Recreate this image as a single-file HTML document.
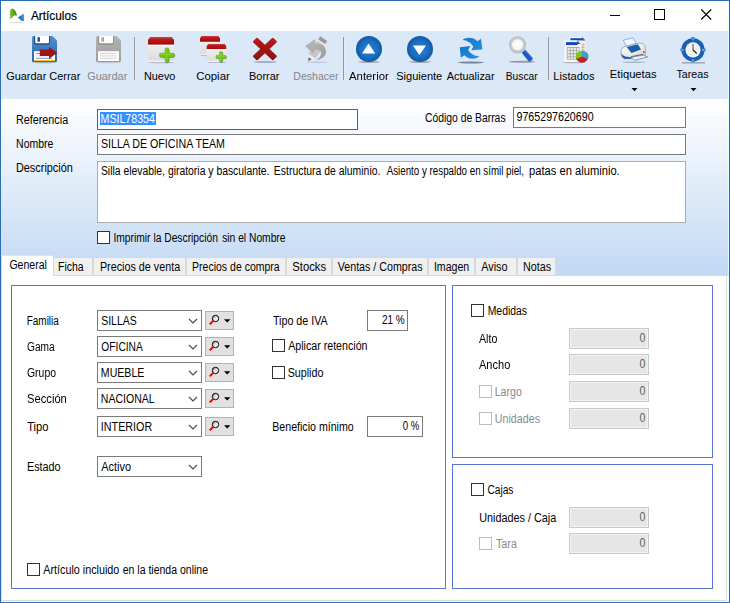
<!DOCTYPE html>
<html><head><meta charset="utf-8">
<style>
*{box-sizing:border-box;margin:0;padding:0}
html,body{width:730px;height:603px;overflow:hidden;background:#fff}
body{font-family:"Liberation Sans",sans-serif;font-size:11px;color:#000;position:relative}
.a{position:absolute;white-space:nowrap;transform-origin:0 0}
.t12{font-size:11.4px;line-height:14px}
.t11{font-size:12.5px;line-height:14px}
.t13{font-size:12.5px;line-height:14px;-webkit-text-stroke:0.2px currentColor}
.dis{color:#858585}
.gr{color:#8a8a8a}
.g0{color:#626262}
.wh{color:#fff}
#win{left:0;top:0;width:730px;height:603px;border:1px solid #2a6db4;background:#fff}
#tb{left:1px;top:31px;width:728px;height:68px;background:#dbe8f7}
.sep{width:1px;background:#96969a;box-shadow:-1px 0 0 #e3edfa,1px 0 0 #e3edfa;top:37px;height:43px}
#hdr{left:1px;top:99px;width:728px;height:177px;background:linear-gradient(#ffffff,#c1d8f3)}
.in{background:#fff;border:1px solid #7a7a7a}
.cb{width:13px;height:13px;border:1px solid #333;background:#fff}
.cbd{width:13px;height:13px;border:1px solid #bcbcbc;background:#fff}
.tab{top:257px;height:18px;background:#f0f0f0;border:1px solid #d9d9d9;border-bottom:none}
#page{left:1px;top:275px;width:726px;height:326px;background:#fff;border:1px solid #dadada}
.gb{border:1px solid #5a74d6;background:#fff}
.cmb{background:#fff;border:1px solid #7a7a7a;height:21px;width:105px;left:97px}
.sb{width:29px;height:19px;background:#e1e1e1;border:1px solid #b2b2b2;left:205px}
.num{background:#e6e6e6;border:1px solid #c9c9c9;box-shadow:inset 0 0 0 1px #f2f2f2;width:80px;height:21px;left:569px}
</style></head><body>
<div class="a" id="win"></div>
<svg class="a" style="left:8px;top:6px" width="18" height="18" viewBox="8 6 18 18"><defs><linearGradient id="ag" x1="0" y1="0" x2="1" y2="0"><stop offset="0" stop-color="#84bc2c"/><stop offset="1" stop-color="#3a8a2c"/></linearGradient><linearGradient id="ab" x1="0" y1="0" x2="1" y2="0"><stop offset="0" stop-color="#1a6cb0"/><stop offset="1" stop-color="#3a96d8"/></linearGradient><filter id="ib"><feGaussianBlur stdDeviation="0.35"/></filter></defs><rect x="9.300" y="7.300" width="15" height="15.300" fill="#fff" stroke="#ececec" stroke-width="0.500"/><path d="M9.500 22.700H24.300" stroke="#d6d6d6" stroke-width="0.700"/><g filter="url(#ib)"><path d="M10.100 19.200V10.600Q11.200 8.700 12.800 8.500Q14.400 8.900 15.900 11.800L16.900 15.100L16.300 15.900Q15 14.800 13.500 15.900Q11.600 17.600 10.100 19.200Z" fill="url(#ag)"/><path d="M18 17.200L23.800 13.800L24 20.900H21.700Q19.600 19.800 18 17.200Z" fill="url(#ab)"/></g></svg>
<svg class="a" style="left:608px;top:7px" width="110" height="16" viewBox="0 0 110 16"><path d="M2 8.5H12" stroke="#000" stroke-width="1"/><rect x="46.5" y="2.5" width="10" height="10" fill="none" stroke="#000"/><path d="M93.200 2.500L103.200 12.500M103.200 2.500L93.200 12.500" stroke="#000" stroke-width="1.1"/></svg>

<div class="a" id="tb"></div>
<svg class="a" style="left:0;top:31px" width="730" height="68" viewBox="0 31 730 68">
<defs>
<linearGradient id="gb1" x1="0" y1="0" x2="0" y2="1"><stop offset="0" stop-color="#4f8fd2"/><stop offset="1" stop-color="#2865ab"/></linearGradient>
<linearGradient id="gg1" x1="0" y1="0" x2="0" y2="1"><stop offset="0" stop-color="#b4b4b4"/><stop offset="1" stop-color="#9c9c9c"/></linearGradient>
<linearGradient id="gr1" x1="0" y1="0" x2="0" y2="1"><stop offset="0" stop-color="#d04040"/><stop offset="0.35" stop-color="#b81616"/><stop offset="1" stop-color="#9a0e0e"/></linearGradient>
<linearGradient id="gw1" x1="0" y1="0" x2="0" y2="1"><stop offset="0" stop-color="#f0f0f0"/><stop offset="0.85" stop-color="#dcdcdc"/><stop offset="1" stop-color="#f4f4f4"/></linearGradient>
<linearGradient id="gp1" x1="0" y1="0" x2="0" y2="1"><stop offset="0" stop-color="#8ad422"/><stop offset="1" stop-color="#55a60e"/></linearGradient>
<linearGradient id="gx1" x1="0" y1="0" x2="0" y2="1"><stop offset="0" stop-color="#c01c1c"/><stop offset="1" stop-color="#861010"/></linearGradient>
<radialGradient id="gc1" cx="0.5" cy="0.5" r="0.5"><stop offset="0" stop-color="#2584dc"/><stop offset="0.7" stop-color="#1a6cc0"/><stop offset="1" stop-color="#12589e"/></radialGradient>
<linearGradient id="ga1" x1="0" y1="0" x2="1" y2="1"><stop offset="0" stop-color="#1478c8"/><stop offset="1" stop-color="#2490de"/></linearGradient>
<radialGradient id="gl1" cx="0.5" cy="0.5" r="0.5"><stop offset="0" stop-color="#ffffff"/><stop offset="0.6" stop-color="#f4f4f4"/><stop offset="0.68" stop-color="#cfcfcf"/><stop offset="1" stop-color="#b8b8b8"/></radialGradient>
<linearGradient id="gun" x1="0" y1="0" x2="1" y2="1"><stop offset="0" stop-color="#bcbcbc"/><stop offset="1" stop-color="#9a9a9a"/></linearGradient>
<filter id="bl" x="-20%" y="-200%" width="140%" height="500%"><feGaussianBlur stdDeviation="0.7"/></filter>
<filter id="b3" x="-10%" y="-10%" width="120%" height="120%"><feGaussianBlur stdDeviation="0.35"/></filter>
</defs>
<!-- Guardar Cerrar -->
<g filter="url(#b3)">
<ellipse cx="44.500" cy="62.300" rx="12.500" ry="0.900" fill="#8a96a6" opacity="0.700"/>
<path d="M33.500 36H52.500L57 40.500V60.500Q57 62 55.500 62H33.500Q32 62 32 60.500V37.500Q32 36 33.500 36Z" fill="url(#gb1)"/>
<path d="M34 36H50V43Q50 44.700 48.300 44.700H35.700Q34 44.700 34 43Z" fill="#1f4f8e"/>
<path d="M35.200 36H49V42.300Q49 43.300 48 43.300H36.200Q35.200 43.300 35.200 42.300Z" fill="#fff"/>
<rect x="37.400" y="37.200" width="2.600" height="4.500" fill="#1d55a0"/>
<path d="M34 51.200H55V61H34Z" fill="#fff"/>
<rect x="34" y="60" width="21" height="1.100" fill="#f0c228"/>
<path d="M36 53.500H52M36 58.300H52" stroke="#5a78b0" stroke-width="0.800"/>
<path d="M36 55.900H52" stroke="#c8d0dc" stroke-width="0.800"/>
<path d="M39.800 49.400H49V47L57.400 52.700L49 58.700V56H39.800Z" fill="#a01212"/>
</g>
<!-- Guardar (disabled) -->
<g filter="url(#b3)">
<ellipse cx="108.500" cy="62.300" rx="12.500" ry="0.900" fill="#a8b0ba" opacity="0.600"/>
<path d="M97.500 36H116.500L121 40.500V60.500Q121 62 119.500 62H97.500Q96 62 96 60.500V37.500Q96 36 97.500 36Z" fill="url(#gg1)"/>
<path d="M98 36H114V43Q114 44.700 112.300 44.700H99.700Q98 44.700 98 43Z" fill="#909090"/>
<path d="M99.200 36H113V42.300Q113 43.300 112 43.300H100.200Q99.200 43.300 99.200 42.300Z" fill="#fff"/>
<rect x="101.400" y="37.200" width="2.600" height="4.500" fill="#a4a4a4"/>
<path d="M98 51.200H119V61H98Z" fill="#fdfdfd"/>
<path d="M100 53.500H116M100 58.300H116" stroke="#cfcfcf" stroke-width="0.900"/>
<path d="M100 55.900H116" stroke="#e4e4e4" stroke-width="1.600"/>
</g>
<!-- Nuevo -->
<g filter="url(#b3)">
<ellipse cx="161" cy="62.500" rx="13" ry="0.800" fill="#9aa4b2" opacity="0.600"/>
<rect x="148" y="44" width="26" height="18" rx="1" fill="url(#gw1)"/>
<path d="M150 37H172Q172.600 39.300 174 39.500V44.800H148V39.500Q149.400 39.300 150 37Z" fill="url(#gr1)"/>
<rect x="148" y="44.800" width="26" height="1" fill="#fff"/>
<path d="M161.700 55.600H173M167.300 50.300V61" stroke="#3c5a28" stroke-opacity="0.550" stroke-width="4.600" stroke-linecap="round" fill="none"/><path d="M161.300 55H172.400M166.800 49.800V60.300" stroke="#6ec21a" stroke-width="4.400" stroke-linecap="round" fill="none"/><path d="M161.300 54.300H172.400M166.300 49.800V60" stroke="#8cd830" stroke-width="1.600" stroke-linecap="round" fill="none" opacity="0.700"/>
</g>
<!-- Copiar -->
<g filter="url(#b3)">
<ellipse cx="207" cy="55.500" rx="7" ry="0.700" fill="#9aa4b2" opacity="0.600"/>
<rect x="200" y="41" width="20" height="14" rx="1" fill="url(#gw1)"/>
<path d="M201.300 36H218.700Q219 37.600 220 38V41.700H200V38Q201 37.600 201.300 36Z" fill="url(#gr1)"/>
<ellipse cx="217" cy="62.400" rx="10" ry="0.700" fill="#9aa4b2" opacity="0.600"/>
<rect x="206.700" y="48.500" width="19.500" height="13.500" rx="1" fill="url(#gw1)"/>
<path d="M208 44H225Q225.300 45.400 226.200 45.800V49.300H206.700V45.800Q207.700 45.400 208 44Z" fill="url(#gr1)"/>
<rect x="206.700" y="49.300" width="19.500" height="0.900" fill="#fff"/>
<path d="M217.600 57.300H225.200M221.400 53.400V61.200" stroke="#3c5a28" stroke-opacity="0.550" stroke-width="3.600" stroke-linecap="round" fill="none"/><path d="M217.200 56.800H224.700M220.900 53V60.600" stroke="#6ec21a" stroke-width="3.400" stroke-linecap="round" fill="none"/><path d="M217.200 56.200H224.700M220.500 53V60.400" stroke="#8cd830" stroke-width="1.200" stroke-linecap="round" fill="none" opacity="0.700"/>
</g>
<!-- Borrar -->
<clipPath id="xc">
<rect x="-14.400" y="-3.300" width="28.800" height="6.600" rx="1.300" transform="translate(264.900 49) scale(1 0.925) rotate(45)"/>
<rect x="-14.400" y="-3.300" width="28.800" height="6.600" rx="1.300" transform="translate(264.900 49) scale(1 0.925) rotate(-45)"/>
</clipPath>
<g filter="url(#b3)">
<ellipse cx="265" cy="62" rx="11.500" ry="1" fill="#8a949e" opacity="0.700"/>
<rect x="251" y="36" width="28" height="26" fill="url(#gx1)" clip-path="url(#xc)"/>
</g>
<!-- Deshacer (disabled) -->
<g filter="url(#b3)">
<ellipse cx="317" cy="62.300" rx="11.500" ry="0.700" fill="#b4bcc6" opacity="0.700"/>
<path d="M320.300 36.200L327.200 41L325 44.300L318 39.600Z" fill="#9a9a9a"/>
<path d="M318 39.600L325 44.300L324.200 45.500L317.200 40.800Z" fill="#eeeeee"/>
<path d="M317.200 40.800L324.200 45.500L315.500 58.500L308.300 53.700Z" fill="#c6c6c6"/>
<path d="M308.300 53.700L315.500 58.500L311.500 59.300L308.600 57.500Z" fill="#ececec"/>
<path d="M308.600 57.200L311.800 59.200L308 61.200Z" fill="#6e6e6e"/>
<path d="M305 46L315.200 39V43.500C322 43.500 326.200 47 326 52C325.800 56.300 321.500 59.600 316.300 60C320 58 321.600 55.200 321 52.600C320.400 50 318 49.200 315.200 49.600L313 53.500Z" fill="url(#gun)"/>
</g>
<!-- Anterior -->
<g filter="url(#b3)">
<ellipse cx="369" cy="62" rx="11" ry="0.900" fill="#8a8f98" opacity="0.700"/>
<circle cx="369" cy="49" r="13" fill="url(#gc1)"/>
<path d="M368.600 43.600L375.200 53.500H362Z" fill="#fff"/>
</g>
<!-- Siguiente -->
<g filter="url(#b3)">
<ellipse cx="420" cy="62" rx="11" ry="0.900" fill="#8a8f98" opacity="0.700"/>
<circle cx="420" cy="49" r="13" fill="url(#gc1)"/>
<path d="M419.400 55L426 45.400H412.900Z" fill="#fff"/>
</g>
<!-- Actualizar -->
<g filter="url(#b3)">
<ellipse cx="471" cy="62.500" rx="13" ry="0.900" fill="#5a6a88" opacity="0.800"/>
<path d="M462.500 40C466 37 473 36.600 477.600 41.200L481 38.800L482.300 49.400L471.200 50.300L473.300 46.800C471 42.500 467 40.300 462.500 40Z" fill="url(#ga1)"/>
<path d="M479.400 56.200C476 59.400 468.600 60 464.400 55.200L460.800 57.800L459.800 47.300L470.400 46L468.200 49.800C470.500 54 474.600 56.300 479.400 56.200Z" fill="url(#ga1)"/>
</g>
<!-- Buscar -->
<g filter="url(#b3)">
<ellipse cx="522" cy="61.700" rx="13" ry="1" fill="#707880" opacity="0.700"/>
<path d="M521.800 52.800L525.300 49.700L532.400 57.800Q533.200 59 532 60L530.400 61.300Q529.200 62 528.300 61Z" fill="#1c5cbc"/>
<path d="M524.400 50.400L525.300 49.700L532.400 57.800Q533 58.600 532.600 59.300Z" fill="#3c80dc"/>
<circle cx="517.600" cy="44.800" r="8.600" fill="url(#gl1)"/>
</g>
<!-- Listados -->
<g filter="url(#b3)">
<ellipse cx="574" cy="62.500" rx="12" ry="0.800" fill="#8a949e" opacity="0.600"/>
<path d="M569 37H582L585.600 40.500V60H569Z" fill="#f4f4f4"/>
<path d="M582 37L585.600 40.500H582Z" fill="#555"/>
<rect x="570.400" y="38.200" width="11.800" height="2.200" fill="#1448c0"/>
<path d="M581.500 43H584.500V56H581.500Z" fill="#d8d8d8"/>
<path d="M581.500 45H584.500M581.500 47.500H584.500M581.500 50H584.500" stroke="#a8a8a8" stroke-width="0.600"/>
<path d="M564.400 40.500H577.200L580.700 44V62H564.400Z" fill="#f6f6f6"/>
<path d="M577.200 40.500L580.700 44H577.200Z" fill="#555"/>
<rect x="566" y="42.100" width="11.600" height="3" fill="#1448c0"/>
<rect x="566.800" y="47" width="12.800" height="12.800" fill="#a8a8a8"/>
<path d="M567.600 48h2.200v2.200h-2.200zM570.700 48h2.200v2.200h-2.200zM573.800 48h2.200v2.200h-2.200zM576.900 48h2.200v2.200h-2.200zM567.600 51.100h2.200v2.200h-2.200zM570.700 51.100h2.200v2.200h-2.200zM573.800 51.100h2.200v2.200h-2.200zM576.900 51.100h2.200v2.200h-2.200zM567.600 54.200h2.200v2.200h-2.200zM570.700 54.200h2.200v2.200h-2.200zM573.800 54.200h2.200v2.200h-2.200zM567.600 57.300h2.200v2h-2.200zM570.700 57.300h2.200v2h-2.200zM573.800 57.300h2.200v2h-2.200z" fill="#ececec"/>
<ellipse cx="582" cy="57" rx="6.200" ry="5.800" fill="#c42222"/>
<path d="M582 56.500L582 50.700A6.200 5.500 0 0 0 576.500 59Z" fill="#7cc81e"/>
<path d="M582 56.500L582 50.700A6.200 5.500 0 0 1 587.600 59Z" fill="#3c9ed0"/>
</g>
<!-- Etiquetas (printer) -->
<linearGradient id="gpr" x1="0" y1="0" x2="1" y2="1"><stop offset="0" stop-color="#fbfaf7"/><stop offset="0.55" stop-color="#eceae4"/><stop offset="1" stop-color="#cfcdc6"/></linearGradient>
<g filter="url(#b3)">
<ellipse cx="634" cy="62.300" rx="12" ry="0.800" fill="#8a8f98" opacity="0.600"/>
<path d="M623.300 40.200L632.800 37.800L636.300 43.400L626.200 46.300Z" fill="#f4f8fe" stroke="#5a88d4" stroke-width="0.600"/>
<path d="M621 50.500Q621 47.500 624.500 46.800L638 43.200Q643.800 42.200 645.200 46.500L645.800 52.500Q645.800 55 643.500 55.500L631.500 58.600L624.500 58.800Q621.500 57.500 621 54.500Z" fill="url(#gpr)" stroke="#2f5faa" stroke-opacity="0.650" stroke-width="0.600"/>
<path d="M626.700 46.900L637.800 44.200L641 49.600L631.500 52.900Z" fill="#1f5ea8"/>
<path d="M621 53.200Q621.500 57.300 624.500 58.900L631.500 58.800L631.500 57.200L625.300 56.400Q622.300 55.200 621 53.200Z" fill="#2360b0"/>
<path d="M631 56.700L643.200 54.300" stroke="#4a4a4a" stroke-width="0.800"/>
<path d="M630.900 57.300L643.400 55.100L647.600 56.900L634.800 60.400Z" fill="#f1f0ea" stroke="#2f64b0" stroke-width="0.600"/>
<circle cx="643.900" cy="52" r="0.900" fill="#e03030"/>
</g>
<!-- Tareas (clock) -->
<g filter="url(#b3)">
<rect x="682" y="62" width="23" height="1.600" fill="#a2acb6"/>
<circle cx="693" cy="49.800" r="11.600" fill="#1660bc"/>
<path d="M691.500 37H694.500V39H691.500ZM691.500 60.500H694.500V62.200H691.500ZM680.500 48.500H682.500V51.200H680.500ZM703.500 48.500H705.500V51.200H703.500Z" fill="#2a78d4"/>
<path d="M692.500 38.400H693.500V40.400H692.500ZM692.500 59.300H693.500V61.300H692.500ZM681.800 49.400H683.800V50.400H681.800ZM702.200 49.400H704.200V50.400H702.200Z" fill="#e8dc9a"/>
<circle cx="693" cy="49.800" r="7.600" fill="#f4f4f4"/>
<path d="M693 44V50" stroke="#555" stroke-width="1.100"/>
<path d="M693 50L696.800 53.500" stroke="#222" stroke-width="1.200"/>
</g>
</svg>

<div class="a sep" style="left:134px"></div>
<div class="a sep" style="left:343px"></div>
<div class="a sep" style="left:548px"></div>
<svg class="a" style="left:630px;top:87px" width="9" height="5"><path d="M1.500 1H7.500L4.500 4.200Z" fill="#000"/></svg>
<svg class="a" style="left:689px;top:87px" width="9" height="5"><path d="M1.500 1H7.500L4.500 4.200Z" fill="#000"/></svg>

<div class="a" id="hdr"></div>
<div class="a" style="left:728px;top:31px;width:1px;height:244px;background:rgba(255,255,255,0.6)"></div>
<div class="a in" style="left:97px;top:109px;width:261px;height:21px;border-color:#0078d7"></div>
<div class="a" style="left:100px;top:112px;width:56px;height:13px;background:#3390ff"></div>
<div class="a in" style="left:513px;top:107px;width:173px;height:21px"></div>
<div class="a in" style="left:97px;top:134px;width:589px;height:21px"></div>
<div class="a in" style="left:97px;top:161px;width:589px;height:62px;border-color:#abadb3"></div>
<div class="a cb" style="left:97px;top:231px"></div>

<div class="a" id="page"></div>
<div class="a tab" style="left:53px;width:40px"></div>
<div class="a tab" style="left:93px;width:93px"></div>
<div class="a tab" style="left:186px;width:100px"></div>
<div class="a tab" style="left:286px;width:46px"></div>
<div class="a tab" style="left:332px;width:96px"></div>
<div class="a tab" style="left:428px;width:47px"></div>
<div class="a tab" style="left:475px;width:42px"></div>
<div class="a tab" style="left:517px;width:39px"></div>
<div class="a tab" style="left:2px;top:255px;width:52px;height:21px;background:#fff;border-color:#e4e4e4 #d9d9d9 #fff #fff"></div>

<div class="a gb" style="left:11px;top:285px;width:435px;height:304px"></div>
<div class="a gb" style="left:452px;top:285px;width:261px;height:173px"></div>
<div class="a gb" style="left:452px;top:464px;width:261px;height:125px"></div>

<!-- combos -->
<div class="a cmb" style="top:310px"></div><div class="a sb" style="top:311px"></div>
<div class="a cmb" style="top:336px"></div><div class="a sb" style="top:337px"></div>
<div class="a cmb" style="top:362px"></div><div class="a sb" style="top:363px"></div>
<div class="a cmb" style="top:388px"></div><div class="a sb" style="top:389px"></div>
<div class="a cmb" style="top:416px"></div><div class="a sb" style="top:417px"></div>
<div class="a cmb" style="top:456px"></div>
<svg class="a" style="left:180px;top:306px" width="60" height="180" viewBox="180 306 60 180">
<defs><linearGradient id="lg" x1="0" y1="0" x2="1" y2="1"><stop offset="0" stop-color="#7a7a7a"/><stop offset="0.5" stop-color="#e8e8e8"/><stop offset="1" stop-color="#fff"/></linearGradient></defs>
<g transform="translate(0 0)"><path d="M189 319L193 323L197 319" fill="none" stroke="#484848" stroke-width="1.100"/><circle cx="215.500" cy="318.500" r="3.200" fill="url(#lg)" stroke="#000" stroke-width="1"/><path d="M213.200 320.800L209.700 324.400" stroke="#e00000" stroke-width="1.900"/><path d="M224 319.300H230.400L227.200 322.600Z" fill="#000"/></g>
<g transform="translate(0 26)"><path d="M189 319L193 323L197 319" fill="none" stroke="#484848" stroke-width="1.100"/><circle cx="215.500" cy="318.500" r="3.200" fill="url(#lg)" stroke="#000" stroke-width="1"/><path d="M213.200 320.800L209.700 324.400" stroke="#e00000" stroke-width="1.900"/><path d="M224 319.300H230.400L227.200 322.600Z" fill="#000"/></g>
<g transform="translate(0 52)"><path d="M189 319L193 323L197 319" fill="none" stroke="#484848" stroke-width="1.100"/><circle cx="215.500" cy="318.500" r="3.200" fill="url(#lg)" stroke="#000" stroke-width="1"/><path d="M213.200 320.800L209.700 324.400" stroke="#e00000" stroke-width="1.900"/><path d="M224 319.300H230.400L227.200 322.600Z" fill="#000"/></g>
<g transform="translate(0 78)"><path d="M189 319L193 323L197 319" fill="none" stroke="#484848" stroke-width="1.100"/><circle cx="215.500" cy="318.500" r="3.200" fill="url(#lg)" stroke="#000" stroke-width="1"/><path d="M213.200 320.800L209.700 324.400" stroke="#e00000" stroke-width="1.900"/><path d="M224 319.300H230.400L227.200 322.600Z" fill="#000"/></g>
<g transform="translate(0 106)"><path d="M189 319L193 323L197 319" fill="none" stroke="#484848" stroke-width="1.100"/><circle cx="215.500" cy="318.500" r="3.200" fill="url(#lg)" stroke="#000" stroke-width="1"/><path d="M213.200 320.800L209.700 324.400" stroke="#e00000" stroke-width="1.900"/><path d="M224 319.300H230.400L227.200 322.600Z" fill="#000"/></g>
<g transform="translate(0 146)"><path d="M189 319L193 323L197 319" fill="none" stroke="#484848" stroke-width="1.100"/></g>
</svg>

<div class="a cb" style="left:27px;top:563px"></div>
<div class="a in" style="left:367px;top:310px;width:41px;height:21px"></div>
<div class="a in" style="left:367px;top:416px;width:56px;height:21px"></div>
<div class="a cb" style="left:272px;top:339px"></div>
<div class="a cb" style="left:272px;top:366px"></div>
<!-- right -->
<div class="a cb" style="left:471px;top:304px"></div>
<div class="a num" style="top:328px"></div>
<div class="a num" style="top:354px"></div>
<div class="a num" style="top:381px"></div>
<div class="a num" style="top:408px"></div>
<div class="a cbd" style="left:479px;top:385px"></div>
<div class="a cbd" style="left:479px;top:412px"></div>
<div class="a cb" style="left:471px;top:483px"></div>
<div class="a num" style="top:507px"></div>
<div class="a num" style="top:533px"></div>
<div class="a cbd" style="left:479px;top:537px"></div>
<div class="a t13" style="left:30px;top:9px;transform:translate(0.93px,0.00px) scaleX(0.9471)">Artículos</div>
<div class="a t12" style="left:6px;top:69px;transform:translate(0.13px,0.00px) scaleX(0.9607)">Guardar Cerrar</div>
<div class="a t12 dis" style="left:87px;top:69px;transform:translate(0.13px,0.00px) scaleX(0.9619)">Guardar</div>
<div class="a t12" style="left:143px;top:69px;transform:translate(0.93px,0.00px) scaleX(0.9556)">Nuevo</div>
<div class="a t12" style="left:196px;top:69px;transform:translate(0.13px,0.00px) scaleX(1.0043)">Copiar</div>
<div class="a t12" style="left:248px;top:69px;transform:translate(0.93px,0.00px) scaleX(0.9652)">Borrar</div>
<div class="a t12 dis" style="left:293px;top:69px;transform:translate(0.30px,0.00px) scaleX(0.9267)">Deshacer</div>
<div class="a t12" style="left:349px;top:69px;transform:translate(0.00px,0.00px) scaleX(0.9968)">Anterior</div>
<div class="a t12" style="left:396px;top:69px;transform:translate(0.20px,0.00px) scaleX(0.9694)">Siguiente</div>
<div class="a t12" style="left:446px;top:69px;transform:translate(0.70px,0.00px) scaleX(0.9563)">Actualizar</div>
<div class="a t12" style="left:505px;top:69px;transform:translate(0.80px,0.00px) scaleX(0.8973)">Buscar</div>
<div class="a t12" style="left:553px;top:69px;transform:translate(0.37px,0.00px) scaleX(0.9683)">Listados</div>
<div class="a t12" style="left:609px;top:67px;transform:translate(0.87px,0.00px) scaleX(0.9822)">Etiquetas</div>
<div class="a t12" style="left:676px;top:67px;transform:translate(0.47px,0.00px) scaleX(0.9366)">Tareas</div>
<div class="a t11" style="left:15px;top:113px;transform:translate(0.93px,0.00px) scaleX(0.8642)">Referencia</div>
<div class="a t11" style="left:16px;top:137px;transform:translate(0.10px,0.00px) scaleX(0.8401)">Nombre</div>
<div class="a t11" style="left:15px;top:161px;transform:translate(0.93px,0.00px) scaleX(0.8717)">Descripción</div>
<div class="a t11 wh" style="left:100px;top:112px;transform:translate(0.60px,0.00px) scaleX(0.8484)">MSIL78354</div>
<div class="a t11" style="left:424px;top:111px;transform:translate(0.93px,0.00px) scaleX(0.8289)">Código de Barras</div>
<div class="a t11" style="left:516px;top:110px;transform:translate(0.50px,0.00px) scaleX(0.8528)">9765297620690</div>
<div class="a t11" style="left:100px;top:137px;transform:translate(0.93px,0.00px) scaleX(0.8518)">SILLA DE OFICINA TEAM</div>
<div class="a t11" style="left:100px;top:164px;transform:translate(0.93px,0.00px) scaleX(0.8308)">Silla elevable, giratoria y basculante.</div>
<div class="a t11" style="left:273px;top:164px;transform:translate(0.87px,0.00px) scaleX(0.8332)">Estructura de aluminio.</div>
<div class="a t11" style="left:386px;top:164px;transform:translate(0.70px,0.00px) scaleX(0.7811)">Asiento y respaldo en símil piel,</div>
<div class="a t11" style="left:528px;top:164px;transform:translate(0.97px,0.00px) scaleX(0.8943)">patas en aluminio.</div>
<div class="a t11" style="left:113px;top:231px;transform:translate(0.43px,0.00px) scaleX(0.8220)">Imprimir la Descripción</div>
<div class="a t11" style="left:222px;top:231px;transform:translate(0.17px,0.00px) scaleX(0.8212)">sin el Nombre</div>
<div class="a t11" style="left:9px;top:258px;transform:translate(0.43px,0.00px) scaleX(0.8412)">General</div>
<div class="a t11" style="left:58px;top:260px;transform:translate(0.10px,0.00px) scaleX(0.8365)">Ficha</div>
<div class="a t11" style="left:99px;top:260px;transform:translate(0.93px,0.00px) scaleX(0.8618)">Precios de venta</div>
<div class="a t11" style="left:192px;top:260px;transform:translate(0.10px,0.00px) scaleX(0.8403)">Precios de compra</div>
<div class="a t11" style="left:292px;top:260px;transform:translate(0.27px,0.00px) scaleX(0.8995)">Stocks</div>
<div class="a t11" style="left:337px;top:260px;transform:translate(0.77px,0.00px) scaleX(0.8528)">Ventas / Compras</div>
<div class="a t11" style="left:433px;top:260px;transform:translate(0.93px,0.00px) scaleX(0.8460)">Imagen</div>
<div class="a t11" style="left:481px;top:260px;transform:translate(0.27px,0.00px) scaleX(0.8645)">Aviso</div>
<div class="a t11" style="left:522px;top:260px;transform:translate(0.93px,0.00px) scaleX(0.8607)">Notas</div>
<div class="a t11" style="left:26px;top:314px;transform:translate(0.67px,0.00px) scaleX(0.7992)">Familia</div>
<div class="a t11" style="left:27px;top:340px;transform:translate(0.00px,0.00px) scaleX(0.8126)">Gama</div>
<div class="a t11" style="left:27px;top:366px;transform:translate(0.00px,0.00px) scaleX(0.8348)">Grupo</div>
<div class="a t11" style="left:27px;top:392px;transform:translate(0.00px,0.00px) scaleX(0.8959)">Sección</div>
<div class="a t11" style="left:27px;top:420px;transform:translate(0.17px,0.00px) scaleX(0.8944)">Tipo</div>
<div class="a t11" style="left:26px;top:460px;transform:translate(0.93px,0.00px) scaleX(0.8633)">Estado</div>
<div class="a t11" style="left:101px;top:314px;transform:translate(0.20px,0.00px) scaleX(0.8386)">SILLAS</div>
<div class="a t11" style="left:101px;top:340px;transform:translate(0.37px,0.00px) scaleX(0.8171)">OFICINA</div>
<div class="a t11" style="left:100px;top:366px;transform:translate(0.87px,0.00px) scaleX(0.8454)">MUEBLE</div>
<div class="a t11" style="left:100px;top:392px;transform:translate(0.87px,0.00px) scaleX(0.8416)">NACIONAL</div>
<div class="a t11" style="left:100px;top:420px;transform:translate(0.87px,0.00px) scaleX(0.8593)">INTERIOR</div>
<div class="a t11" style="left:101px;top:460px;transform:translate(0.27px,0.00px) scaleX(0.8733)">Activo</div>
<div class="a t11" style="left:43px;top:563px;transform:translate(0.27px,0.00px) scaleX(0.8616)">Artículo incluido</div>
<div class="a t11" style="left:122px;top:563px;transform:translate(0.73px,0.00px) scaleX(0.8402)">en la tienda online</div>
<div class="a t11" style="left:272px;top:314px;transform:translate(0.90px,0.00px) scaleX(0.8576)">Tipo de IVA</div>
<div class="a t11" style="left:381px;top:313px;transform:translate(0.93px,0.00px) scaleX(0.7991)">21 %</div>
<div class="a t11" style="left:288px;top:339px;transform:translate(0.13px,0.00px) scaleX(0.8528)">Aplicar retención</div>
<div class="a t11" style="left:287px;top:366px;transform:translate(0.63px,0.00px) scaleX(0.8587)">Suplido</div>
<div class="a t11" style="left:272px;top:420px;transform:translate(0.23px,0.00px) scaleX(0.8502)">Beneficio mínimo</div>
<div class="a t11" style="left:402px;top:419px;transform:translate(0.67px,0.00px) scaleX(0.7674)">0 %</div>
<div class="a t11" style="left:487px;top:304px;transform:translate(0.67px,0.00px) scaleX(0.8329)">Medidas</div>
<div class="a t11" style="left:479px;top:332px;transform:translate(0.00px,0.00px) scaleX(0.8492)">Alto</div>
<div class="a t11" style="left:479px;top:358px;transform:translate(0.00px,0.00px) scaleX(0.8828)">Ancho</div>
<div class="a t11 gr" style="left:494px;top:385px;transform:translate(0.67px,0.00px) scaleX(0.8516)">Largo</div>
<div class="a t11 gr" style="left:494px;top:412px;transform:translate(0.67px,0.00px) scaleX(0.8585)">Unidades</div>
<div class="a t11 g0" style="left:639px;top:331px;transform:translate(0.50px,0.00px) scaleX(0.8500)">0</div>
<div class="a t11 g0" style="left:639px;top:357px;transform:translate(0.50px,0.00px) scaleX(0.8500)">0</div>
<div class="a t11 g0" style="left:639px;top:384px;transform:translate(0.50px,0.00px) scaleX(0.8500)">0</div>
<div class="a t11 g0" style="left:639px;top:411px;transform:translate(0.50px,0.00px) scaleX(0.8500)">0</div>
<div class="a t11" style="left:487px;top:483px;transform:translate(0.43px,0.00px) scaleX(0.8137)">Cajas</div>
<div class="a t11" style="left:479px;top:511px;transform:translate(0.17px,0.00px) scaleX(0.8657)">Unidades / Caja</div>
<div class="a t11 gr" style="left:495px;top:537px;transform:translate(0.97px,0.00px) scaleX(0.8589)">Tara</div>
<div class="a t11 g0" style="left:639px;top:510px;transform:translate(0.50px,0.00px) scaleX(0.8500)">0</div>
<div class="a t11 g0" style="left:639px;top:536px;transform:translate(0.50px,0.00px) scaleX(0.8500)">0</div>
</body></html>
